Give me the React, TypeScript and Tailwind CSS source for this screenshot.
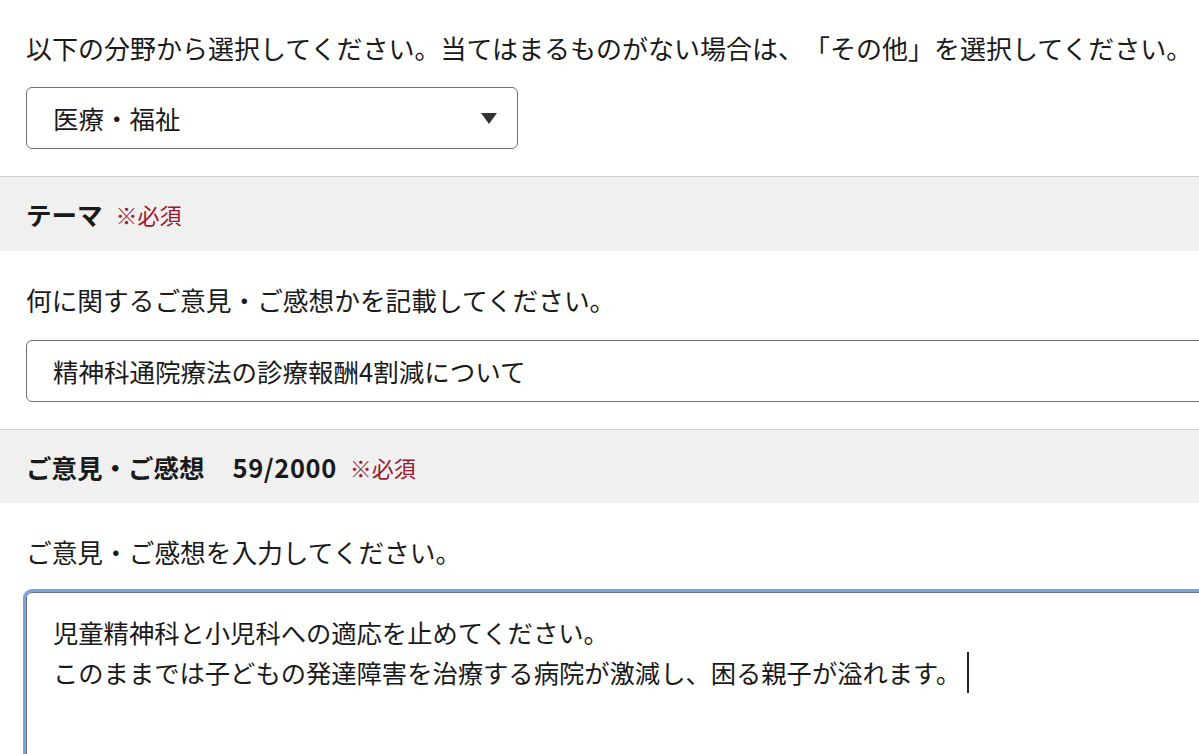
const REQUIRED = "※必須";

function SectionHeader({ children }: { children: React.ReactNode }) {
  return (
    <div className="flex h-[75px] items-center border-t border-[#cfcfcf] bg-[#f0f0f0] px-[26px]">
      {children}
    </div>
  );
}

function Required() {
  return (
    <span className="ml-[13px] text-[22px] leading-none text-[#9a1b2e]">
      {REQUIRED}
    </span>
  );
}

export default function App() {
  return (
    <div
      className="h-[754px] overflow-hidden bg-white text-[#1a1a1a] [text-spacing-trim:space-all]"
      style={{ fontFamily: "'Noto Sans CJK JP', 'Noto Sans', sans-serif" }}
    >
      {/* 分野 */}
      <section className="px-[26px] pb-[27px] pt-[29px]">
        <p className="whitespace-nowrap text-[26px] leading-[38px]">
          以下の分野から選択してください。当てはまるものがない場合は、「その他」を選択してください。
        </p>
        <div className="mt-[20px] flex h-[62px] w-[492px] items-center justify-between rounded-[6px] border border-[#707070] pl-[26px] pr-[20px]">
          <span className="text-[25.5px] leading-none">医療・福祉</span>
          <svg width="16" height="11" viewBox="0 0 16 11" aria-hidden>
            <path d="M0 0H16L8 11Z" fill="#333" />
          </svg>
        </div>
      </section>

      {/* テーマ */}
      <SectionHeader>
        <span className="text-[25.5px] font-bold leading-none">テーマ</span>
        <Required />
      </SectionHeader>
      <section className="px-[26px] pb-[27px] pt-[30px]">
        <p className="text-[25.7px] leading-[38px]">
          何に関するご意見・ご感想かを記載してください。
        </p>
        <div className="-mr-[60px] mt-[21px] flex h-[62px] items-center rounded-[6px] border border-[#707070] pl-[26px]">
          <span className="text-[25.5px] leading-none">
            精神科通院療法の診療報酬4割減について
          </span>
        </div>
      </section>

      {/* ご意見・ご感想 */}
      <div className="flex h-[74px] items-center border-t border-[#cfcfcf] bg-[#f0f0f0] px-[26px]">
        <span className="text-[25.5px] font-bold leading-none">ご意見・ご感想</span>
        <span className="ml-[28px] text-[25.5px] font-bold leading-none tracking-[0.6px]">
          59/2000
        </span>
        <Required />
      </div>
      <section className="px-[26px] pt-[30px]">
        <p className="text-[25.7px] leading-[38px]">
          ご意見・ご感想を入力してください。
        </p>
        <div className="-mr-[60px] mt-[21px] h-[220px] rounded-[6px] border border-[#707070] pl-[26px] pt-[20px] shadow-[0_0_0_3px_#76a4e2]">
          <p className="text-[25.3px] leading-[39px]">
            児童精神科と小児科への適応を止めてください。
          </p>
          <p className="flex items-center text-[25.3px] leading-[39px]">
            このままでは子どもの発達障害を治療する病院が激減し、困る親子が溢れます。
            <span className="ml-[6px] inline-block h-[41px] w-[2px] bg-[#222]" />
          </p>
        </div>
      </section>
    </div>
  );
}
